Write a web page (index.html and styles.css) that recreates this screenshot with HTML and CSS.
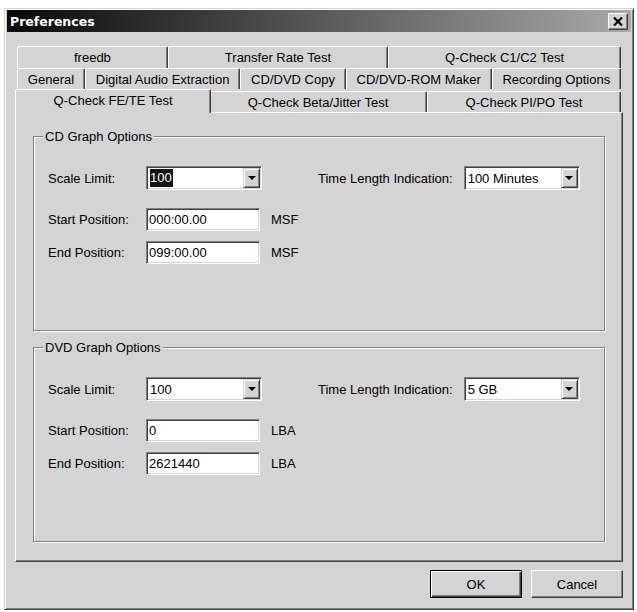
FILE: index.html
```html
<!DOCTYPE html>
<html lang="en">
<head>
    <meta charset="UTF-8">
    <title>Preferences</title>
    <link rel="stylesheet" href="styles.css">
</head>
<body>

<div class="window">
    <div class="titlebar">
        <span class="title">Preferences</span>
        <span class="close-btn">
            <svg width="10" height="9" viewBox="0 0 10 9"><path d="M1 0.5 L9 8.5 M9 0.5 L1 8.5" stroke="#000" stroke-width="2.2" fill="none"/></svg>
        </span>
    </div>

    <div class="dialog-body">
        <div class="tabs">
            <div class="tab-row row-back">
                <div class="tab">freedb</div>
                <div class="tab">Transfer Rate Test</div>
                <div class="tab">Q-Check C1/C2 Test</div>
            </div>
            <div class="tab-row row-middle">
                <div class="tab">General</div>
                <div class="tab">Digital Audio Extraction</div>
                <div class="tab">CD/DVD Copy</div>
                <div class="tab">CD/DVD-ROM Maker</div>
                <div class="tab">Recording Options</div>
            </div>
            <div class="tab-row row-front">
                <div class="tab active">Q-Check FE/TE Test</div>
                <div class="tab">Q-Check Beta/Jitter Test</div>
                <div class="tab">Q-Check PI/PO Test</div>
            </div>
        </div>

        <div class="panel">
            <fieldset class="group">
                <legend>CD Graph Options</legend>
                <div class="field-row combo-row">
                    <span class="label">Scale Limit:</span>
                    <div class="combo">
                        <span class="combo-value"><span class="selected">100</span></span>
                        <span class="combo-btn"><span class="arrow"></span></span>
                    </div>
                    <span class="label label-wide">Time Length Indication:</span>
                    <div class="combo">
                        <span class="combo-value">100 Minutes</span>
                        <span class="combo-btn"><span class="arrow"></span></span>
                    </div>
                </div>
                <div class="field-row">
                    <span class="label">Start Position:</span>
                    <div class="textbox">000:00.00</div>
                    <span class="unit">MSF</span>
                </div>
                <div class="field-row">
                    <span class="label">End Position:</span>
                    <div class="textbox">099:00.00</div>
                    <span class="unit">MSF</span>
                </div>
            </fieldset>

            <fieldset class="group">
                <legend>DVD Graph Options</legend>
                <div class="field-row combo-row">
                    <span class="label">Scale Limit:</span>
                    <div class="combo">
                        <span class="combo-value">100</span>
                        <span class="combo-btn"><span class="arrow"></span></span>
                    </div>
                    <span class="label label-wide">Time Length Indication:</span>
                    <div class="combo">
                        <span class="combo-value">5 GB</span>
                        <span class="combo-btn"><span class="arrow"></span></span>
                    </div>
                </div>
                <div class="field-row">
                    <span class="label">Start Position:</span>
                    <div class="textbox">0</div>
                    <span class="unit">LBA</span>
                </div>
                <div class="field-row">
                    <span class="label">End Position:</span>
                    <div class="textbox">2621440</div>
                    <span class="unit">LBA</span>
                </div>
            </fieldset>
        </div>

        <div class="buttons">
            <button class="btn btn-default">OK</button>
            <button class="btn">Cancel</button>
        </div>
    </div>
</div>

</body>
</html>
```

FILE: styles.css
```css
body {
    margin: 0;
    background-color: #fff;
    font-family: "Liberation Sans", Arial, sans-serif;
    font-size: 13px;
    color: #000;
}
.window {
    box-sizing: border-box;
    width: 630px;
    height: 602px;
    margin: 8px 0 0 4px;
    background-color: #d4d4d4;
    border: 1px solid;
    border-color: #d4d4d4 #404040 #404040 #d4d4d4;
    box-shadow: inset 1px 1px #fff, inset -1px -1px #808080;
    padding: 1px;
    display: flex;
    flex-direction: column;
}
.titlebar {
    height: 22px;
    margin: 0 1px;
    display: flex;
    align-items: center;
    justify-content: space-between;
    background: linear-gradient(to right, #080808, #a9a9a9);
    padding: 0 3px 0 3px;
}
.title {
    font-family: "DejaVu Sans", sans-serif;
    font-weight: bold;
    font-size: 12.5px;
    color: #fff;
}
.close-btn {
    box-sizing: border-box;
    width: 20px;
    height: 17px;
    display: flex;
    align-items: center;
    justify-content: center;
    background-color: #d4d4d4;
    border: 1px solid;
    border-color: #fff #404040 #404040 #fff;
    box-shadow: inset -1px -1px #808080;
}
.dialog-body {
    flex: 1;
    display: flex;
    flex-direction: column;
    padding: 14px 9px 10px 9px;
}
.tab-row {
    display: flex;
    margin: 0 2px;
}
.row-back {
    height: 22px;
}
.row-middle {
    height: 21px;
}
.row-front {
    height: 23px;
    align-items: flex-end;
}
.tab {
    box-sizing: border-box;
    flex: 1 1 auto;
    height: 100%;
    text-align: center;
    white-space: nowrap;
    padding-top: 3px;
    border-top: 1px solid #fff;
    border-left: 1px solid #fff;
    border-right: 1px solid #404040;
    border-radius: 2px 2px 0 0;
    box-shadow: inset -1px 0 #808080;
}
.row-front .tab {
    height: 21px;
}
.row-front .tab.active {
    position: relative;
    z-index: 1;
    height: 24px;
    margin: 0 -2px -1px -2px;
    padding-top: 3px;
    background-color: #d4d4d4;
}
.panel {
    box-sizing: border-box;
    height: 450px;
    display: flex;
    flex-direction: column;
    gap: 9px;
    padding: 16px 17px 19px 17px;
    border: 1px solid;
    border-color: #fff #404040 #404040 #fff;
    box-shadow: inset -1px -1px #808080;
}
.group {
    flex: 1;
    min-width: 0;
    margin: 0;
    padding: 0 23px 0 14px;
    border: 1px solid #808080;
    box-shadow: inset 1px 1px #fff, 1px 1px #fff;
}
.group legend {
    margin-left: -5px;
    padding: 0 2px;
    background-color: #d4d4d4;
}
.field-row {
    display: flex;
    align-items: center;
    margin-bottom: 10px;
}
.combo-row {
    margin-top: 22px;
    margin-bottom: 18px;
}
.label {
    width: 98px;
    flex-shrink: 0;
}
.label-wide {
    width: auto;
    margin-left: 56px;
    margin-right: 11px;
}
.combo,
.textbox {
    box-sizing: border-box;
    background-color: #fff;
    border: 1px solid;
    border-color: #808080 #fff #fff #808080;
    box-shadow: inset 1px 1px #404040, inset -1px -1px #d4d4d4;
    padding: 1px;
}
.combo {
    width: 116px;
    height: 24px;
    display: flex;
}
.combo-value {
    flex: 1;
    display: flex;
    align-items: center;
    padding-left: 2px;
}
.selected {
    background-color: #141414;
    color: #fff;
    line-height: 18px;
    padding-right: 1px;
}
.combo-btn {
    box-sizing: border-box;
    width: 17px;
    display: flex;
    align-items: center;
    justify-content: center;
    background-color: #d4d4d4;
    border: 1px solid;
    border-color: #d4d4d4 #404040 #404040 #d4d4d4;
    box-shadow: inset 1px 1px #fff, inset -1px -1px #808080;
}
.arrow {
    width: 0;
    height: 0;
    border-left: 4px solid transparent;
    border-right: 4px solid transparent;
    border-top: 4px solid #000;
}
.textbox {
    width: 114px;
    height: 23px;
    line-height: 19px;
    padding-left: 2px;
}
.unit {
    margin-left: 11px;
}
.buttons {
    display: flex;
    justify-content: flex-end;
    gap: 9px;
    margin-top: 8px;
}
.btn {
    box-sizing: border-box;
    width: 92px;
    height: 28px;
    font-family: "Liberation Sans", Arial, sans-serif;
    font-size: 13px;
    color: #000;
    background-color: #d4d4d4;
    border: 1px solid;
    border-color: #fff #404040 #404040 #fff;
    box-shadow: inset -1px -1px #808080;
    padding: 0;
}
.btn-default {
    border-color: #000;
    box-shadow: inset 1px 1px #fff, inset -1px -1px #404040, inset -2px -2px #808080;
}
```
